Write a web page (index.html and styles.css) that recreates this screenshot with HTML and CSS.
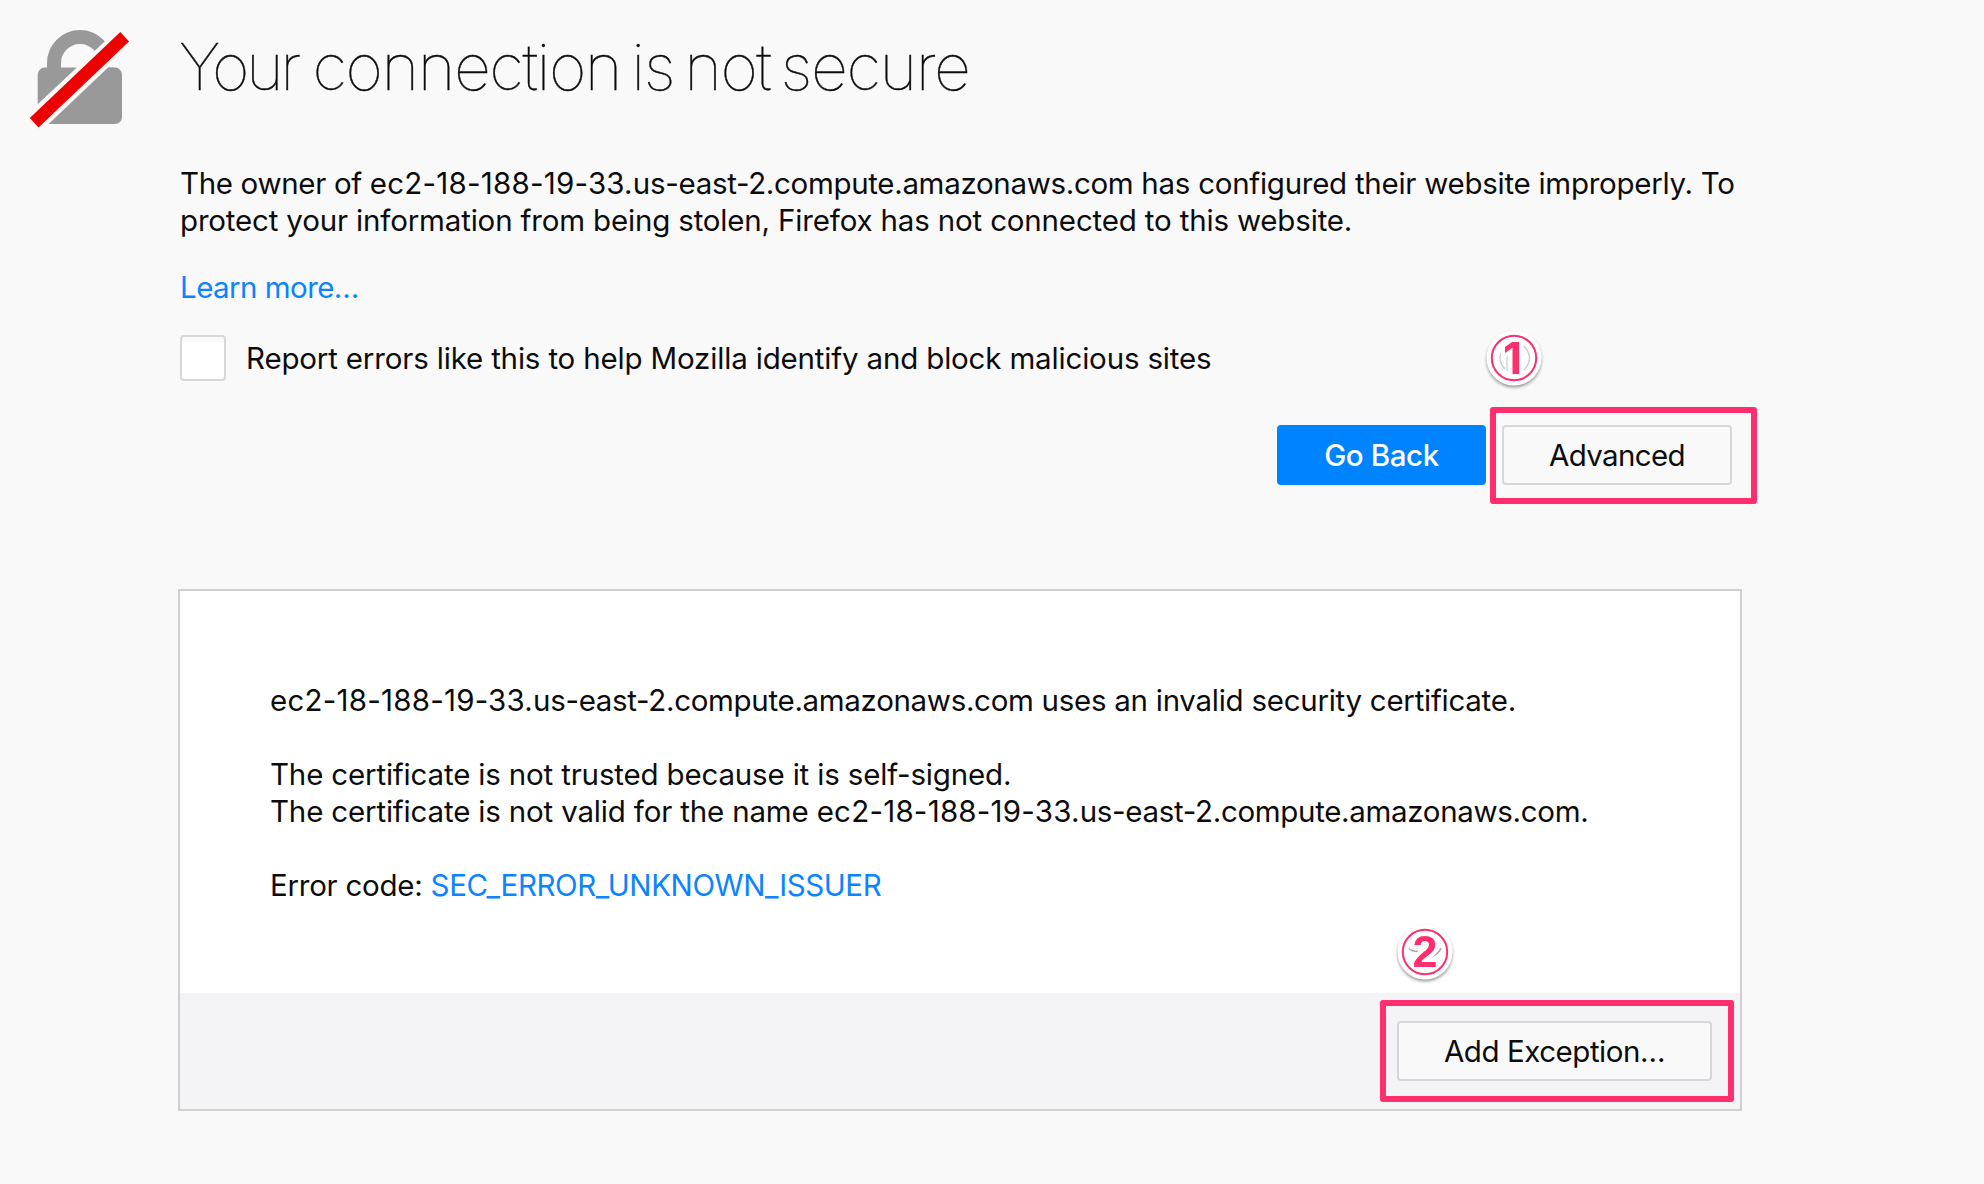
FILE: index.html
```html
<!DOCTYPE html>
<html lang="en">
<head>
<meta charset="utf-8">
<title>Insecure Connection</title>
<link rel="stylesheet" href="styles.css">
</head>
<body>
<main class="page">
  <header class="title">
    <svg class="lock" width="104" height="104" viewBox="28 28 104 104" aria-hidden="true">
      <path d="M54 68V63A26 26 0 0 1 106 63V68" fill="none" stroke="#999" stroke-width="14"/>
      <path class="gap" d="M84 72L132 28V67.6H88Z"/>
      <rect x="37.7" y="67.6" width="84.3" height="56.4" rx="7" fill="#999"/>
      <path class="gap" d="M117.5 29.5L136 41L47 125.5L38.5 133L24 117Z"/>
      <path d="M120.3 32L129 41.5L38.5 127.5L29.8 118Z" fill="#ed0000"/>
    </svg>
    <h1><span class="first">Your </span>connection is not secure</h1>
  </header>

  <section class="message">
    <p class="intro"><span class="lead">The owner of </span><span class="node">ec2-18-188-19-33.</span><span class="domain">us-east-2.compute.amazonaws.com</span><span class="reason"> has configured their website improperly. To</span><br><span class="advice">protect your information from being stolen, Firefox has not connected to this website.</span></p>
    <p class="learn"><a class="learn-link">Learn more…</a></p>
    <label class="report"><span class="box"></span><span class="advice">Report errors like this to help Mozilla identify and block malicious sites</span></label>
    <div class="actions">
      <button class="btn primary">Go Back</button>
      <button class="btn advanced">Advanced</button>
      <div class="mark mark-1"></div>
      <svg class="badge badge-1" width="64" height="64" viewBox="0 0 64 64">
        <circle cx="32" cy="32" r="27.5" fill="#fff"/>
        <path d="M23 22Q13 32 23 43M42 20Q53 32 42 44" fill="none" stroke="#ccc" stroke-width="1.4"/>
        <path d="M19 24L23 25L25 24V45M39.5 18V45" fill="none" stroke="#ccc" stroke-width="1.2"/>
        <text class="digit" x="30.5" y="48" text-anchor="middle">1</text>
        <circle cx="32" cy="32" r="22.2" fill="none" stroke="#ff2f6e" stroke-width="2"/>
      </svg>
    </div>
  </section>

  <section class="panel">
    <div class="details">
      <p><span class="node">ec2-18-188-19-33.</span><span class="domain">us-east-2.compute.amazonaws.com</span><span class="reason"> uses an invalid security certificate.</span></p>
      <p><span class="advice">The certificate is not trusted because it is self-signed.</span><br><span class="advice">The certificate is not valid for the name </span><span class="node">ec2-18-188-19-33.</span><span class="domain">us-east-2.compute.amazonaws.com.</span></p>
      <p><span class="label">Error code: </span><a class="code">SEC_ERROR_UNKNOWN_ISSUER</a></p>
    </div>
    <footer class="panel-foot">
      <button class="btn exception">Add Exception…</button>
      <div class="mark mark-2"></div>
      <svg class="badge badge-2" width="64" height="64" viewBox="0 0 64 64">
        <circle cx="32" cy="32" r="27.5" fill="#fff"/>
        <path d="M16 28Q19 32 25 31M38 37Q46 34 48 28" fill="none" stroke="#aaa" stroke-width="1.6"/>
        <text class="digit digit-2" x="32" y="47.3" text-anchor="middle">2</text>
        <circle cx="32" cy="32" r="22.2" fill="none" stroke="#ff2f6e" stroke-width="2"/>
      </svg>
    </footer>
  </section>
</main>
</body>
</html>
```
FILE: styles.css
```css
* { box-sizing: border-box; }
body {
  margin: 0;
  background: #f9f9f9;
  color: #0c0c0d;
  font: 29.5px/37px Inter, "Liberation Sans", sans-serif;
}
p, h1 { margin: 0; }
span, a, h1 { white-space: pre; }
a { color: #0a84ff; }
.page { width: 1984px; height: 1184px; padding: 28px 0 0 28px; overflow: hidden; }
.title { display: flex; height: 137px; }
.lock { flex: none; }
.gap { fill: #f9f9f9; }
h1 {
  margin-left: 47px;
  font-size: 64.5px; font-weight: 100; line-height: 78px;
  letter-spacing: -1.45px; word-spacing: -6.5px;
  -webkit-text-stroke: .4px #0c0c0d;
}
.first { letter-spacing: -3.4px; word-spacing: 0; }
.lead { letter-spacing: -.34px; }
.node { letter-spacing: .22px; }
.domain { letter-spacing: -.32px; }
.reason { letter-spacing: -.27px; }
.advice { letter-spacing: -.17px; }
.label { letter-spacing: -.25px; }
.learn-link { letter-spacing: -.55px; }
.code { letter-spacing: -.39px; }
.message { margin-left: 152px; width: 1552px; }
.learn { margin-top: 30px; }
.report { display: flex; align-items: center; gap: 20px; margin-top: 29px; height: 46px; }
.box {
  width: 46px; height: 46px;
  border: 2px solid #d7d7db; border-radius: 4px;
  background: linear-gradient(#f9f9f9 4px, #fff 5px);
}
.actions { position: relative; display: flex; justify-content: flex-end; gap: 16px; margin-top: 44px; }
.btn {
  height: 60px; padding: 0;
  border: 2px solid #d7d7db; border-radius: 4px;
  background: #f9f9f9; color: #0c0c0d; font: inherit;
}
.primary { width: 209px; border-color: #0083ff; background: #0083ff; color: #fff; font-weight: 500; letter-spacing: -.4px; }
.advanced { width: 230px; letter-spacing: -.63px; }
.exception { width: 315px; letter-spacing: -.45px; }
.mark { position: absolute; border: 6px solid #ff2f6e; border-radius: 3px; }
.mark-1 { left: 1310px; top: -18px; width: 267px; height: 97px; }
.badge { position: absolute; filter: drop-shadow(0 2px 1.5px rgba(0, 0, 0, .38)); }
.badge-1 { left: 1302px; top: -99px; }
.digit { font: bold 44px Inter, sans-serif; fill: #ff2f6e; stroke: #fff; stroke-width: 8px; paint-order: stroke; }
.digit-2 { font: bold 45px "Liberation Sans", Arial, sans-serif; }
.panel { margin: 104px 0 0 150px; width: 1564px; height: 522px; border: 2px solid #d0d0d0; background: #fff; }
.details { height: 402px; padding: 91px 0 0 90px; }
.details p + p { margin-top: 37px; }
.panel-foot { position: relative; display: flex; justify-content: flex-end; height: 116px; padding: 28px; background: #f4f4f7; }
.mark-2 { left: 1200px; top: 7px; width: 354px; height: 102px; }
.badge-2 { left: 1213px; top: -73px; }
```
